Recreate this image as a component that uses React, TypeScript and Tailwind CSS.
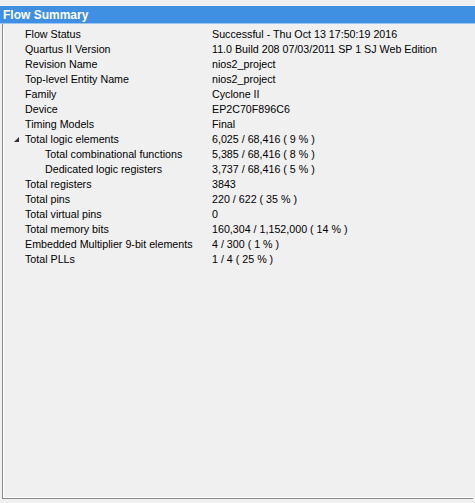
import React from 'react'

type Row = { label: string; value: string; indent?: boolean; expanded?: boolean }

const rows: Row[] = [
  { label: 'Flow Status', value: 'Successful - Thu Oct 13 17:50:19 2016' },
  { label: 'Quartus II Version', value: '11.0 Build 208 07/03/2011 SP 1 SJ Web Edition' },
  { label: 'Revision Name', value: 'nios2_project' },
  { label: 'Top-level Entity Name', value: 'nios2_project' },
  { label: 'Family', value: 'Cyclone II' },
  { label: 'Device', value: 'EP2C70F896C6' },
  { label: 'Timing Models', value: 'Final' },
  { label: 'Total logic elements', value: '6,025 / 68,416 ( 9 % )', expanded: true },
  { label: 'Total combinational functions', value: '5,385 / 68,416 ( 8 % )', indent: true },
  { label: 'Dedicated logic registers', value: '3,737 / 68,416 ( 5 % )', indent: true },
  { label: 'Total registers', value: '3843' },
  { label: 'Total pins', value: '220 / 622 ( 35 % )' },
  { label: 'Total virtual pins', value: '0' },
  { label: 'Total memory bits', value: '160,304 / 1,152,000 ( 14 % )' },
  { label: 'Embedded Multiplier 9-bit elements', value: '4 / 300 ( 1 % )' },
  { label: 'Total PLLs', value: '1 / 4 ( 25 % )' },
]

export default function App() {
  return (
    <div
      className="w-[475px] h-[503px] bg-[#f0f0f0] text-black overflow-hidden flex flex-col pt-[6px]"
      style={{ fontFamily: '"Liberation Sans", Arial, sans-serif' }}
    >
      {/* Title bar */}
      <div className="h-[18px] bg-[#3f8fe3] border-b border-[#9cc6f0] flex items-center pl-[3px]">
        <span className="text-white font-bold text-[12px] leading-none">Flow Summary</span>
      </div>

      {/* Table */}
      <div className="mx-[2px] h-[475px] border-l border-b border-[#8a8a8a] flex flex-col pt-[3px]">
        <div className="flex-1 border-l border-b border-white">
          {rows.map((r) => (
            <div key={r.label} className="h-[15px] flex items-center text-[10.7px] leading-none whitespace-nowrap">
              <div className="w-[208px] flex items-center shrink-0">
                <div className="w-[21px] flex justify-center pl-[4px] shrink-0">
                  {r.expanded && (
                    <svg width="7" height="7" viewBox="0 0 7 7">
                      <path d="M6 1 L6 6 L1 6 Z" fill="#333" />
                    </svg>
                  )}
                </div>
                <span className={r.indent ? 'pl-[20px]' : ''}>{r.label}</span>
              </div>
              <span>{r.value}</span>
            </div>
          ))}
        </div>
      </div>
    </div>
  )
}
